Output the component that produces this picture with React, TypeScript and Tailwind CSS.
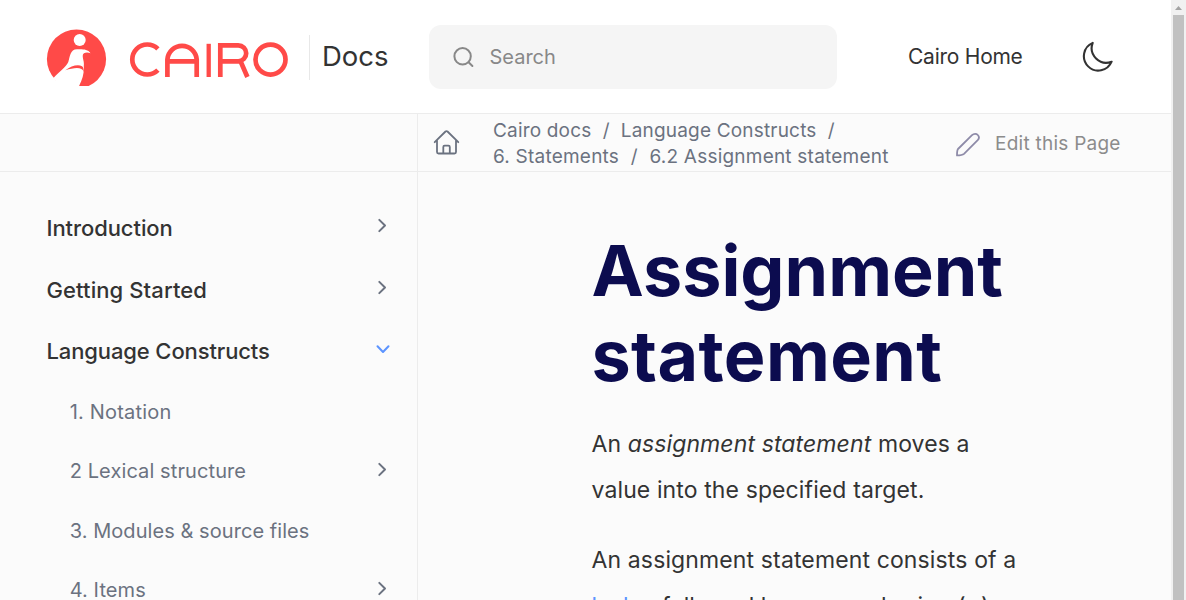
import { ReactNode } from "react";

const chapters: { label: string; state?: "closed" | "open"; child?: boolean; cls: string }[] = [
  { label: "Introduction", state: "closed", cls: "h-[62px] tracking-[-0.08px]" },
  { label: "Getting Started", state: "closed", cls: "h-[62px] tracking-[0.1px]" },
  { label: "Language Constructs", state: "open", cls: "h-[61px] tracking-[-0.12px]" },
  { label: "1. Notation", child: true, cls: "h-[60px] tracking-[0.2px]" },
  { label: "2 Lexical structure", state: "closed", child: true, cls: "h-[58px] tracking-[0.1px]" },
  { label: "3. Modules & source files", child: true, cls: "h-[62px] tracking-[0.06px]" },
  { label: "4. Items", state: "closed", child: true, cls: "h-[55px] tracking-[0.1px]" },
];

function Chevron({ open }: { open?: boolean }) {
  return open ? (
    <svg className="h-4 w-4 shrink-0 text-[#5c94ff]" viewBox="0 0 16 16" fill="none" stroke="currentColor" strokeWidth="2" strokeLinecap="round" strokeLinejoin="round">
      <path d="M3.5 5.3 L9 11 L14.5 5.3" />
    </svg>
  ) : (
    <svg className="h-4 w-4 shrink-0 text-[#6b7280]" viewBox="0 0 16 16" fill="none" stroke="currentColor" strokeWidth="2" strokeLinecap="round" strokeLinejoin="round">
      <path d="M5.3 2.9 L11 8.5 L5.3 14.1" />
    </svg>
  );
}

function Logo() {
  return (
    <svg className="h-[60px] w-[244px] shrink-0" viewBox="46 28 244 60" fill="none">
      <defs>
        <clipPath id="mark"><rect x="46" y="28" width="62" height="58" /></clipPath>
      </defs>
      <g clipPath="url(#mark)">
        <circle cx="76.5" cy="59" r="29.6" fill="#ff4a48" />
        <circle cx="79.7" cy="40" r="6" fill="#fff" />
        <path d="M53.5 78 C58 73 66 67 68.3 62 C70 57 70 49.3 77 49.3 C82 49.2 87.5 48.8 90.5 53.2 C87 51.8 82.6 52.5 82.7 56 C82.8 59.5 84.3 61.5 83.8 65.5 C84.2 74 82.5 79 78.6 87 L60 87 Z" fill="#fff" />
        <path d="M65.3 70.3 C71 65.8 78 64 82 66.2 C83.3 67 83.7 69 83.6 72 C82.5 66.5 74 67.6 65.3 70.3 Z" fill="#ff4a48" />
      </g>
      <g stroke="#ff4a48" strokeWidth="4.7">
        <path d="M157.9 48.9 A15 15 0 1 0 157.9 70.1" />
        <path d="M167.4 77 V59.4 A14.7 14.7 0 0 1 196.7 59.4 V77 M167.4 61.4 H196.7" />
        <path d="M208.7 43.8 V77" strokeWidth="4.3" />
        <path d="M220.3 77 V45.3 H238.2 A8 8 0 0 1 238.2 61.3 H220.3 M240.2 60.5 L247.4 77" />
        <circle cx="270.5" cy="59.6" r="15" />
      </g>
    </svg>
  );
}

function Crumb({ children }: { children: ReactNode }) {
  return <span className="whitespace-pre">{children}</span>;
}

export default function App() {
  return (
    <div className="flex h-[600px] w-[1186px] overflow-hidden bg-[#fbfbfb] font-['Inter',sans-serif] text-[#333]">
      <div className="flex w-[1171px] flex-col">
        <header className="flex h-[114px] shrink-0 items-start border-b border-[#ececec] bg-white pl-[46px]">
          <div className="pt-7"><Logo /></div>
          <div className="mt-[35px] ml-[19px] h-[45px] border-l border-[#e8e8e8] pl-3 text-[27.5px] leading-[42px]">Docs</div>
          <div className="mt-[25px] ml-auto flex h-16 w-[408px] shrink-0 items-center rounded-xl bg-[#f5f5f5] pl-6 text-[20px] text-[#888]">
            <svg className="mr-[15.5px] h-[21px] w-[21px]" viewBox="0 0 21 21" fill="none" stroke="currentColor" strokeWidth="2" strokeLinecap="round">
              <circle cx="9.6" cy="9.3" r="8.2" />
              <path d="M15.6 15.3 L19.4 19" />
            </svg>
            Search
          </div>
          <div className="mt-[42px] ml-[71px] w-[174px] text-[21px] leading-[30px] tracking-[-0.25px] whitespace-nowrap">Cairo Home</div>
          <svg className="mt-10 mr-[57px] h-[33px] w-[32px] shrink-0" viewBox="1082 40 32 33" fill="none" stroke="#333" strokeWidth="2.1" strokeLinejoin="round" strokeLinecap="round">
            <path d="M1092.7 42.9 A14.4 14.4 0 1 0 1111.6 61.7 A14.6 14.6 0 0 1 1092.7 42.9 Z" />
          </svg>
        </header>
        <div className="flex h-[58px] shrink-0 border-b border-[#ececec] text-[#6b7280]">
          <div className="w-[418px] shrink-0 border-r border-[#ececec]" />
          <svg className="mt-[15px] ml-[15px] h-[28px] w-[28px] shrink-0" viewBox="433 129 28 28" fill="none" stroke="currentColor" strokeWidth="1.8" strokeLinejoin="round" strokeLinecap="round">
            <path d="M434.7 142.2 L445.5 131.5 Q446.5 130.7 447.5 131.5 L458.3 142.2 M437 140.5 V152 Q437 153.5 438.5 153.5 H454.5 Q456 153.5 456 152 V140.5 M443.3 153 V147 Q443.3 145.7 444.6 145.7 H448.5 Q449.8 145.7 449.8 147 V153" />
          </svg>
          <div className="mt-1 ml-8 w-[463px] text-[19px] leading-[26px] tracking-[0.18px]">
            <div><Crumb>Cairo docs</Crumb><span className="px-[11.2px]">/</span><Crumb>Language Constructs</Crumb><span className="px-[11.2px]">/</span></div>
            <div className="tracking-[0.22px]"><Crumb>6. Statements</Crumb><span className="px-[11.6px]">/</span><Crumb>6.2 Assignment statement</Crumb></div>
          </div>
          <svg className="mt-[18px] h-[25px] w-[25px] shrink-0" viewBox="956 132 25 25" fill="none" stroke="#8e8ba8" strokeWidth="1.8" strokeLinejoin="round">
            <path d="M958 149 L972 135.2 C974 133.3 976.5 133.6 977.8 135 C979.2 136.5 979.2 138.6 977.7 140.2 L964 153.8 C962.3 155.3 959.5 155.4 957 155.4 C957 153 957 150.5 958 149 Z" />
          </svg>
          <div className="mt-[17px] ml-[14px] text-[19px] leading-[26px] tracking-[0.25px] whitespace-nowrap text-[#8c8c8c]">Edit this Page</div>
        </div>
        <div className="flex min-h-0 flex-1">
          <nav className="w-[418px] shrink-0 border-r border-[#ececec] pt-[25px]">
            {chapters.map((c) => (
              <div key={c.label} className={`flex items-center justify-between pr-[27px] ${c.cls} ${c.child ? "pl-[69.7px] text-[20px] text-[#6b7280]" : "pl-[46.5px] text-[22px] font-medium"}`}>
                <span className="whitespace-nowrap">{c.label}</span>
                {c.state && <span className={c.child ? "-mt-1" : "-mt-1.5"}><Chevron open={c.state === "open"} /></span>}
              </div>
            ))}
          </nav>
          <main className="h-[428px] overflow-hidden pt-[56px] pl-[173.5px]">
            <h1 className="w-[460px] text-[70px] leading-[85px] font-bold text-[#0c0c4f]">Assignment <span className="tracking-[0.4px]">statement</span></h1>
            <p className="mt-[23px] w-[440px] text-[23px] leading-[46px] tracking-[0.11px]">An <em>assignment statement</em> moves a<br />value into the specified target.</p>
            <p className="mt-6 w-[440px] text-[23px] leading-[46px] tracking-[0.13px] whitespace-nowrap">An assignment statement consists of a<br /><span className="tracking-[0.02px]"><a className="text-[#5c94ff]">lvalue</a> followed by an equals sign (=)</span></p>
          </main>
        </div>
      </div>
      <div className="flex w-[15px] shrink-0 flex-col items-center bg-[#f1f1f1]">
        <svg className="h-[15px] w-[15px] shrink-0" viewBox="0 0 15 15"><path d="M4 10 L7.5 6 L11 10 Z" fill="#a3a3a3" /></svg>
        <div className="w-[11px] flex-1 bg-[#c1c1c1]" />
      </div>
    </div>
  );
}
